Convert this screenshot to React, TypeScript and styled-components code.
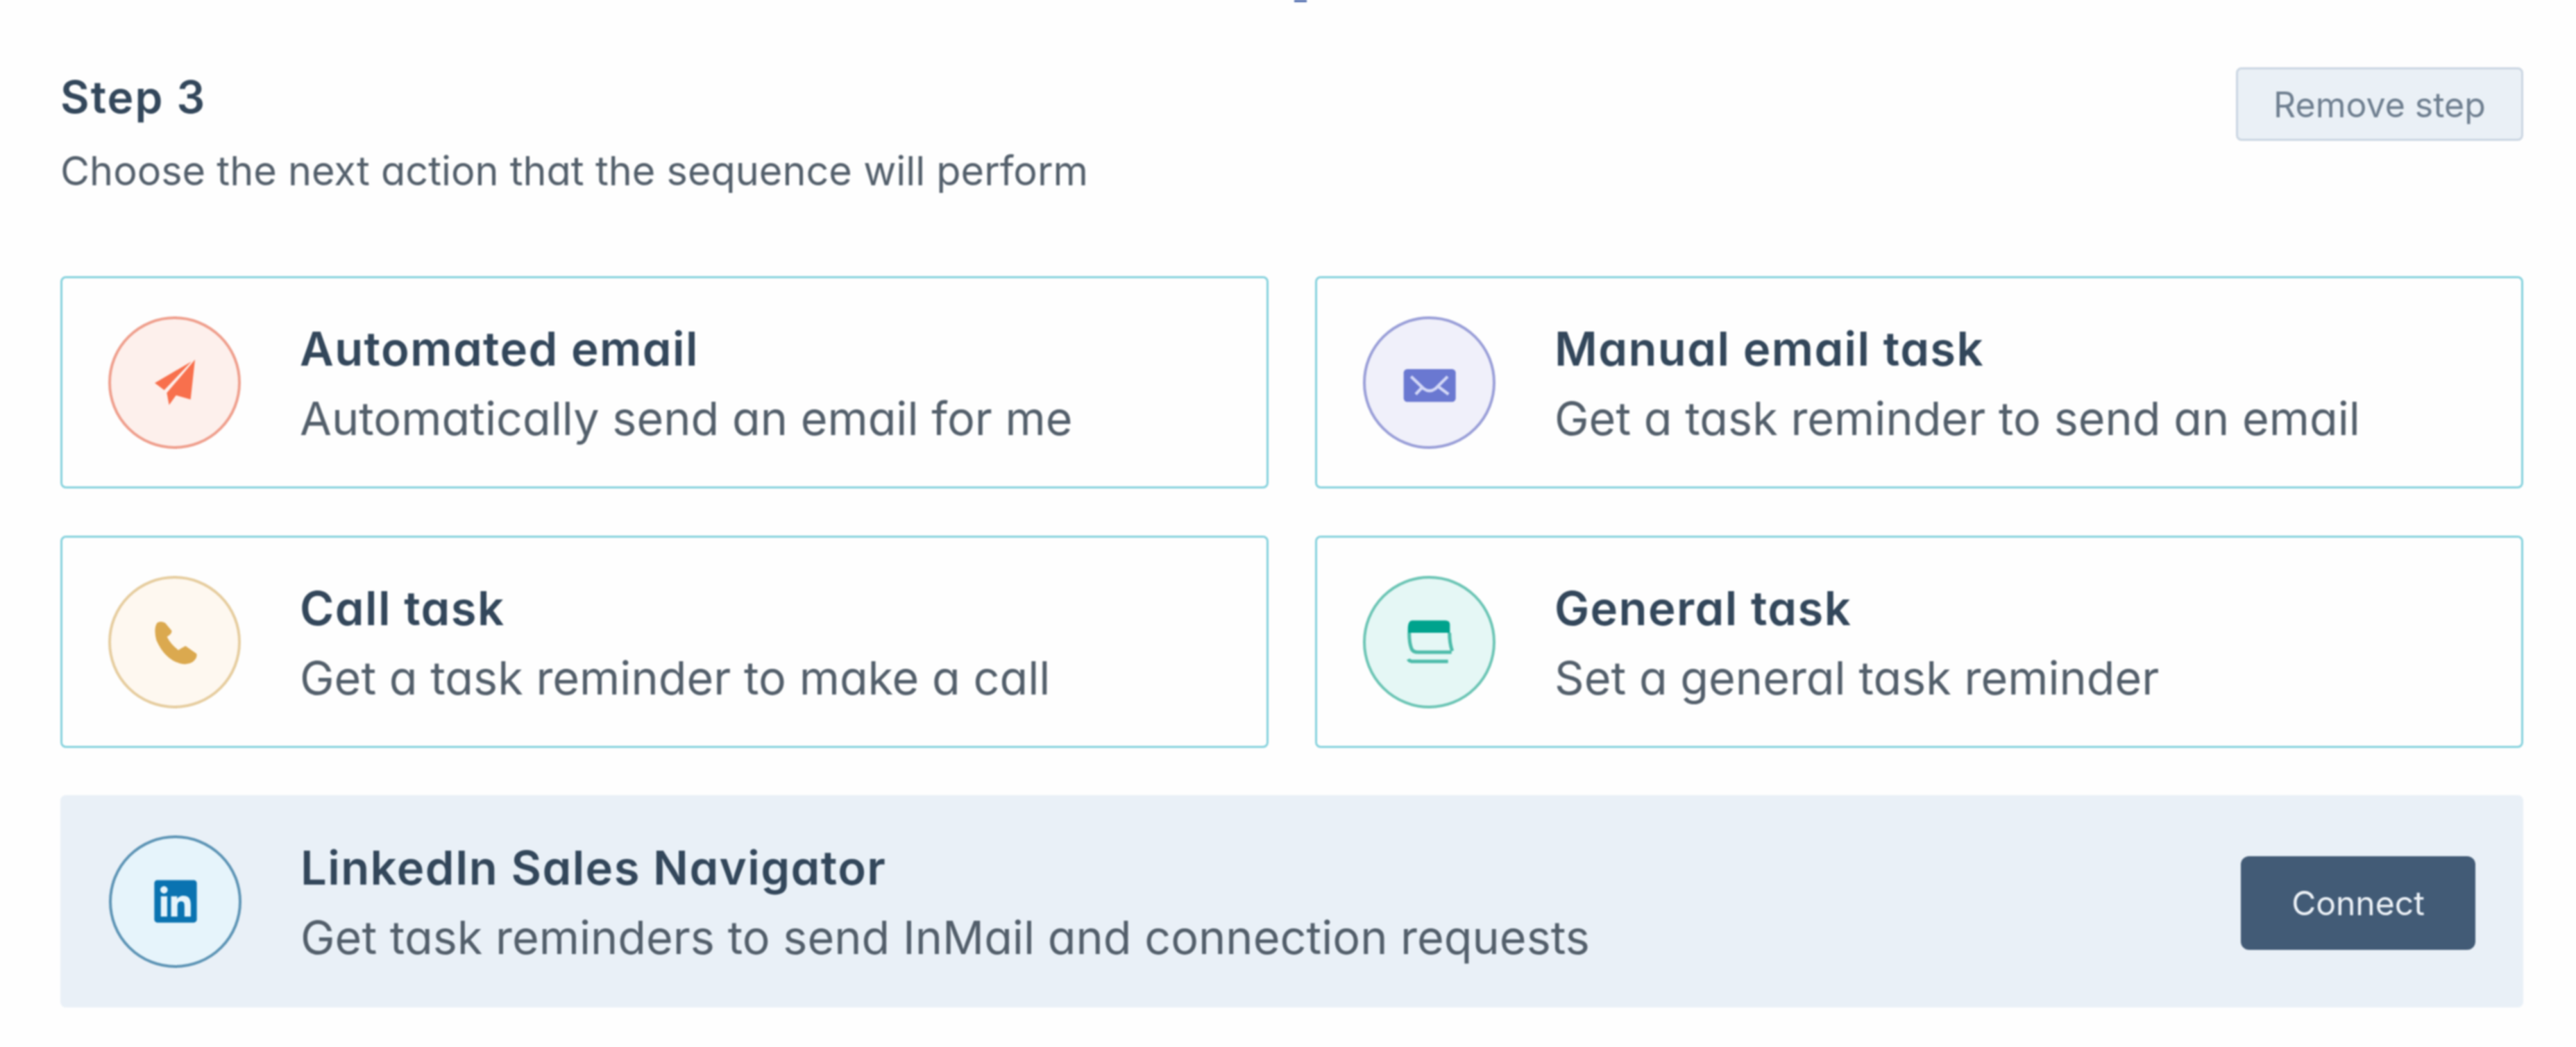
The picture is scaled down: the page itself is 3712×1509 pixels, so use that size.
import React from 'react'
import styled, { createGlobalStyle } from 'styled-components'
import { FaLinkedin } from 'react-icons/fa'

const GlobalStyle = createGlobalStyle`
    html, body {
        margin: 0;
        background: #fefefe;
    }
    body {
        font-family: Inter, "Open Sans", sans-serif;
        font-feature-settings: "cv11";
    }
`

// the reference is an upscaled capture, everything in it is a little soft
const Page = styled.div`
    position: relative;
    width: 3712px;
    height: 1509px;
    box-sizing: border-box;
    padding: 97px 76px 0 87px;
    filter: blur(1.3px);
`
const TopMark = styled.div`
    position: absolute;
    top: 0;
    left: 1865px;
    width: 18px;
    height: 3px;
    background: #3f5ea6;
`
const Header = styled.div`
    display: flex;
    justify-content: space-between;
    align-items: flex-start;
    height: 301px;
`
const HeaderText = styled.div`
    display: flex;
    flex-direction: column;
`
const StepTitle = styled.div`
    font-size: 64px;
    line-height: 86px;
    font-weight: 600;
    letter-spacing: 2px;
    color: #33475b;
`
const StepSub = styled.div`
    margin-top: 23px;
    font-size: 57.6px;
    line-height: 80px;
    font-weight: 400;
    color: #535f6b;
`
const RemoveButton = styled.button`
    width: 414px;
    height: 106px;
    box-sizing: border-box;
    padding-top: 3px;
    border: 3px solid #cbd6e2;
    border-radius: 8px;
    background: #eaf0f6;
    color: #6f7f90;
    font-family: inherit;
    font-feature-settings: inherit;
    font-size: 50px;
`
const Grid = styled.div`
    display: grid;
    grid-template-columns: 1fr 1fr;
    grid-auto-rows: 306px;
    column-gap: 67px;
    row-gap: 68px;
`
const Card = styled.div<{ $banner?: boolean }>`
    display: flex;
    align-items: center;
    box-sizing: border-box;
    padding: 0 69px 0 ${p => (p.$banner ? 70 : 66)}px;
    border-radius: 8px;
    border: ${p => (p.$banner ? 'none' : '3.5px solid #86d2dd')};
    background: ${p => (p.$banner ? '#e9f0f7' : '#fefefe')};
    grid-column: ${p => (p.$banner ? '1 / -1' : 'auto')};
`
const IconCircle = styled.div<{ $fill: string; $line: string }>`
    display: flex;
    align-items: center;
    justify-content: center;
    flex: none;
    width: 191px;
    height: 191px;
    box-sizing: border-box;
    border-radius: 50%;
    background: ${p => p.$fill};
    border: 4px solid ${p => p.$line};
`
const CardText = styled.div`
    flex: 1;
    margin-top: 3px;
    margin-left: 85px;
`
const CardTitle = styled.div`
    font-size: 67px;
    line-height: 100px;
    font-weight: 600;
    letter-spacing: 1.4px;
    color: #33475b;
`
const CardSub = styled.div`
    font-size: 66.5px;
    line-height: 100px;
    font-weight: 400;
    color: #535f6b;
`
const ConnectButton = styled.button`
    width: 338px;
    height: 135px;
    margin-top: 5px;
    border: none;
    border-radius: 12px;
    background: #425b76;
    color: #eef3f8;
    font-family: inherit;
    font-feature-settings: inherit;
    font-size: 48px;
`

const iconSize = 80

const SendIcon = () => (
    <svg width={iconSize} height={iconSize} viewBox="0 0 240 240">
        <path fill="#f8704d" d="M33 123 L192 30 L74 154 Z M207 22 L188 194 L125 176 L95 218 L85 166 Z" />
    </svg>
)

const MailIcon = () => (
    <svg width={iconSize} height={iconSize} viewBox="0 0 240 240">
        <rect x="8" y="63" width="225" height="142" rx="16" fill="#6a78d1" />
        <path
            fill="none"
            stroke="#d3d7f6"
            strokeWidth="13"
            d="M40 95 L95 148 Q120 166 145 148 L198 95 M60 172 L88 142 M202 172 L160 140"
        />
    </svg>
)

const PhoneIcon = () => (
    <svg width={iconSize} height={iconSize} viewBox="0 0 240 240">
        <path
            fill="#dba94f"
            d="M43 38 Q58 28 78 38 L106 72 Q108 86 86 98 Q100 128 135 156 Q150 146 166 138 L214 172 Q218 192 196 208 Q175 222 140 213 Q75 193 40 113 Q27 63 43 38 Z"
        />
    </svg>
)

const TaskIcon = () => (
    <svg width={iconSize} height={iconSize} viewBox="0 0 240 240">
        <path fill="#00a38d" d="M26 66 Q26 28 46 28 L188 28 Q208 28 208 46 L208 81 L26 81 Z" />
        <path
            fill="none"
            stroke="#4dbcaa"
            strokeWidth="15"
            d="M32 81 Q32 125 42 150 Q48 165 70 165 L215 165 M206 81 Q206 125 218 160 M28 195 Q32 205 50 205 L200 205"
        />
    </svg>
)

const LinkedinIcon = () => <FaLinkedin size={70} color="#0a73b1" />

const actions = [
    {
        title: 'Automated email',
        sub: 'Automatically send an email for me',
        fill: '#fdf0ec',
        line: '#ef9f8d',
        icon: <SendIcon />,
    },
    {
        title: 'Manual email task',
        sub: 'Get a task reminder to send an email',
        fill: '#f0f0fa',
        line: '#9a9fd8',
        icon: <MailIcon />,
    },
    {
        title: 'Call task',
        sub: 'Get a task reminder to make a call',
        fill: '#fef8f0',
        line: '#e6cd9f',
        icon: <PhoneIcon />,
    },
    {
        title: 'General task',
        sub: 'Set a general task reminder',
        fill: '#e5f7f5',
        line: '#6cc5b5',
        icon: <TaskIcon />,
    },
]

const App: React.FC = () => {
    return (
        <Page>
            <GlobalStyle />
            <TopMark />
            <Header>
                <HeaderText>
                    <StepTitle>Step 3</StepTitle>
                    <StepSub>Choose the next action that the sequence will perform</StepSub>
                </HeaderText>
                <RemoveButton>Remove step</RemoveButton>
            </Header>
            <Grid>
                {actions.map(a => (
                    <Card key={a.title}>
                        <IconCircle $fill={a.fill} $line={a.line}>
                            {a.icon}
                        </IconCircle>
                        <CardText>
                            <CardTitle>{a.title}</CardTitle>
                            <CardSub>{a.sub}</CardSub>
                        </CardText>
                    </Card>
                ))}
                <Card $banner>
                    <IconCircle $fill="#e6f4fb" $line="#5d94b5">
                        <LinkedinIcon />
                    </IconCircle>
                    <CardText>
                        <CardTitle>LinkedIn Sales Navigator</CardTitle>
                        <CardSub>Get task reminders to send InMail and connection requests</CardSub>
                    </CardText>
                    <ConnectButton>Connect</ConnectButton>
                </Card>
            </Grid>
        </Page>
    )
}

export default App
